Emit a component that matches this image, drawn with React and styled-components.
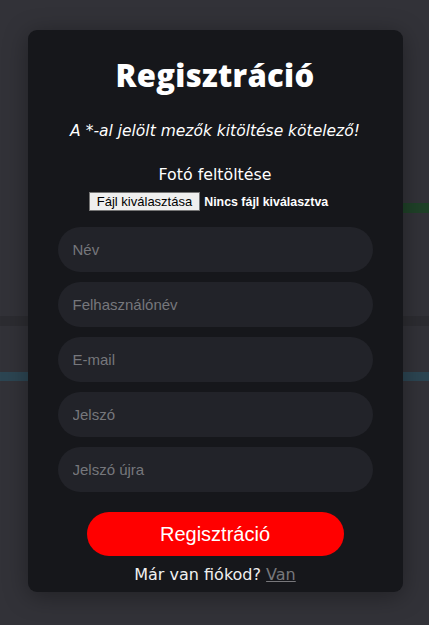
import React from "react";
import styled, { createGlobalStyle } from "styled-components";

const GlobalStyle = createGlobalStyle`
  html, body {
    margin: 0;
    padding: 0;
    background-color: #323238;
  }
  * {
    box-sizing: border-box;
  }
`;

const Page = styled.div`
  position: relative;
  width: 100%;
  height: 625px;
  overflow: hidden;
  background-color: #323238;
`;

// dimmed page content behind the modal
const Backdrop = styled.div`
  display: flex;
  flex-direction: column;
  height: 100%;
`;

const Band = styled.div`
  height: ${(p) => p.h}px;
  margin-top: ${(p) => p.top}px;
  background-color: ${(p) => p.color};
  margin-left: ${(p) => p.left || 0}px;
`;

const Overlay = styled.div`
  position: absolute;
  inset: 0;
  display: flex;
  justify-content: center;
  padding-top: 30px;
`;

const Modal = styled.form`
  width: 375px;
  height: 562px;
  margin-left: 1px;
  background-color: #16171b;
  border-radius: 9px;
  box-shadow: 0 4px 24px rgba(0, 0, 0, 0.35);
  display: flex;
  flex-direction: column;
  align-items: center;
  padding-top: 25px;
  font-family: "DejaVu Sans", "Noto Sans", sans-serif;
  color: #ffffff;
`;

const Title = styled.h1`
  margin: 0;
  font-family: "Open Sans", "Noto Sans", sans-serif;
  font-size: 31px;
  font-weight: 800;
  letter-spacing: 0.3px;
  line-height: 40px;
`;

const Note = styled.p`
  margin: 25px 0 0;
  font-size: 15.5px;
  font-style: italic;
  line-height: 22px;
`;

const UploadLabel = styled.label`
  margin-top: 23px;
  font-size: 15.8px;
  line-height: 20px;
`;

const FileRow = styled.div`
  display: flex;
  align-items: center;
  gap: 4px;
  margin-top: 7px;
  margin-right: 13px;
  font-family: "Liberation Sans", Arial, sans-serif;
  font-size: 13px;
`;

const FileButton = styled.span`
  display: inline-block;
  background-color: #efefef;
  color: #000;
  border: 1px solid #767676;
  padding: 1px 7px;
  line-height: 15px;
`;

const FileText = styled.span`
  color: #fff;
  font-weight: 700;
  font-size: 12.4px;
`;

const Fields = styled.div`
  display: flex;
  flex-direction: column;
  gap: 10px;
  margin-top: 16px;
`;

const Input = styled.input`
  width: 315px;
  height: 45px;
  border: none;
  outline: none;
  border-radius: 23px;
  background-color: #222329;
  padding: 0 15px;
  font-family: "Liberation Sans", Arial, sans-serif;
  font-size: 15px;
  color: #fff;
  &::placeholder {
    color: #76777c;
  }
`;

const Submit = styled.button`
  margin-top: 20px;
  width: 257px;
  height: 44px;
  border: none;
  border-radius: 22px;
  background-color: #ff0000;
  color: #fff;
  font-family: "Liberation Sans", Arial, sans-serif;
  font-size: 20px;
`;

const Footer = styled.p`
  margin: 9px 0 0;
  font-size: 16px;
  line-height: 20px;
  color: #f0f0f0;
`;

const FooterLink = styled.a`
  color: #77777b;
  text-decoration: underline;
`;

const fields = ["Név", "Felhasználónév", "E-mail", "Jelszó", "Jelszó újra"];

export default function App() {
  return (
    <Page>
      <GlobalStyle />
      <Backdrop>
        <Band h={10} top={203} left={402} color="#1f4128" />
        <Band h={10} top={103} color="#2c2c31" />
        <Band h={9} top={46} color="#2c4552" />
      </Backdrop>
      <Overlay>
        <Modal onSubmit={(e) => e.preventDefault()}>
          <Title>Regisztráció</Title>
          <Note>A *-al jelölt mezők kitöltése kötelező!</Note>
          <UploadLabel>Fotó feltöltése</UploadLabel>
          <FileRow>
            <FileButton>Fájl kiválasztása</FileButton>
            <FileText>Nincs fájl kiválasztva</FileText>
          </FileRow>
          <Fields>
            {fields.map((f) => (
              <Input key={f} placeholder={f} type={f.startsWith("Jelsz") ? "password" : "text"} />
            ))}
          </Fields>
          <Submit type="submit">Regisztráció</Submit>
          <Footer>
            Már van fiókod? <FooterLink href="#">Van</FooterLink>
          </Footer>
        </Modal>
      </Overlay>
    </Page>
  );
}
